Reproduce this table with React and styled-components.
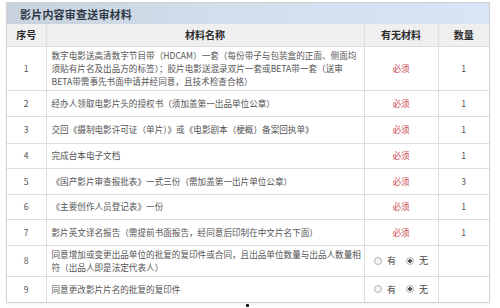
import React from "react";
import styled, { createGlobalStyle } from "styled-components";

const Global = createGlobalStyle`
  html, body { margin: 0; padding: 0; background: #fff; }
  body { font-family: "Noto Sans CJK SC", "Noto Sans", sans-serif; }
`;

const Page = styled.div`
  width: 500px;
  height: 308px;
  padding: 2px 10px 0 6px;
  box-sizing: border-box;
  display: flex;
  flex-direction: column;
  align-items: stretch;
`;

const Panel = styled.section`
  border: 1px solid #d2d2d2;
  box-shadow: 0 1px 2px rgba(0, 0, 0, 0.08);
  background: #fff;
`;

const TitleBar = styled.h2`
  margin: 0;
  height: 21px;
  display: flex;
  align-items: center;
  padding-left: 13px;
  background: linear-gradient(to right, #c8d2de 0%, #d2deec 45%, #d8e5f6 100%);
  font-size: 11px;
  font-weight: 700;
  color: #2f3a46;
  letter-spacing: 0.2px;
`;

const Table = styled.table`
  width: 100%;
  border-collapse: collapse;
  table-layout: fixed;
`;

const HeadRow = styled.tr`
  background: #efefef;
  height: 22px;
`;

const HeadCell = styled.th`
  font-size: 10px;
  font-weight: 700;
  color: #2b2b2b;
  text-align: center;
  padding: 0;
  border-left: 1px solid #dedede;
  &:first-child { border-left: none; }
`;

const Row = styled.tr`
  height: ${(p) => p.$h || 26}px;
  border-top: 1px solid #dcdcdc;
`;

const Cell = styled.td`
  font-size: 8.6px;
  line-height: 13px;
  color: #555;
  padding: 2px ${(p) => (p.$left ? "5px" : "0")};
  text-align: ${(p) => (p.$left ? "left" : "center")};
  vertical-align: middle;
  border-left: 1px solid #dedede;
  white-space: nowrap;
  &:first-child { border-left: none; }
`;

const Line = styled.span`
  display: block;
`;

const Required = styled.span`
  color: #cc4a52;
`;

const RadioGroup = styled.div`
  display: flex;
  align-items: center;
  justify-content: center;
  gap: 4px;
`;

const RadioItem = styled.label`
  display: flex;
  align-items: center;
  gap: 5px;
  margin: 0 3px;
  font-size: 9px;
  color: #444;
`;

const RadioDot = styled.span`
  width: 6px;
  height: 6px;
  border-radius: 50%;
  border: 1px solid #b5b5b5;
  background: ${(p) => (p.$on ? "radial-gradient(circle, #555 0 1.6px, #f4f4f4 2px)" : "#f4f4f4")};
  box-sizing: content-box;
`;

const Footer = styled.div`
  display: flex;
  justify-content: center;
  padding-top: 1px;
`;

const Dot = styled.span`
  width: 3px;
  height: 3px;
  background: #111;
  border-radius: 1px;
  margin-left: -2px;
`;

const Radio = () => (
  <RadioGroup>
    <RadioItem>
      <RadioDot />有
    </RadioItem>
    <RadioItem>
      <RadioDot $on />无
    </RadioItem>
  </RadioGroup>
);

const rows = [
  {
    n: 1,
    h: 43,
    lines: [
      "数字电影送高清数字节目带（HDCAM）一套（每份带子与包装盒的正面、侧面均",
      "须贴有片名及出品方的标签）；胶片电影送混录双片一套或BETA带一套（送审",
      "BETA带需事先书面申请并经同意，且技术检查合格）",
    ],
    q: "1",
  },
  { n: 2, lines: ["经办人领取电影片头的授权书（须加盖第一出品单位公章）"], q: "1" },
  { n: 3, h: 27, lines: ["交回《摄制电影许可证（单片）》或《电影剧本（梗概）备案回执单》"], q: "1" },
  { n: 4, h: 25, lines: ["完成台本电子文档"], q: "1" },
  { n: 5, lines: ["《国产影片审查报批表》一式三份（需加盖第一出片单位公章）"], q: "3" },
  { n: 6, h: 25, lines: ["《主要创作人员登记表》一份"], q: "1" },
  { n: 7, lines: ["影片英文译名报告（需提前书面报告，经同意后印制在中文片名下面）"], q: "1" },
  {
    n: 8,
    h: 31,
    radio: true,
    lines: [
      "同意增加或变更出品单位的批复的复印件或合同，且出品单位数量与出品人数量相",
      "符（出品人即是法定代表人）",
    ],
    q: "",
  },
  { n: 9, radio: true, lines: ["同意更改影片片名的批复的复印件"], q: "" },
];

export default function App() {
  return (
    <Page>
      <Global />
      <Panel>
        <TitleBar>影片内容审查送审材料</TitleBar>
        <Table>
          <colgroup>
            <col style={{ width: 39 }} />
            <col style={{ width: 318 }} />
            <col style={{ width: 74 }} />
            <col />
          </colgroup>
          <thead>
            <HeadRow>
              <HeadCell>序号</HeadCell>
              <HeadCell>材料名称</HeadCell>
              <HeadCell>有无材料</HeadCell>
              <HeadCell>数量</HeadCell>
            </HeadRow>
          </thead>
          <tbody>
            {rows.map((r) => (
              <Row key={r.n} $h={r.h}>
                <Cell>{r.n}</Cell>
                <Cell $left>
                  {r.lines.map((l, i) => (
                    <Line key={i}>{l}</Line>
                  ))}
                </Cell>
                <Cell>{r.radio ? <Radio /> : <Required>必须</Required>}</Cell>
                <Cell>{r.q}</Cell>
              </Row>
            ))}
          </tbody>
        </Table>
      </Panel>
      <Footer>
        <Dot />
      </Footer>
    </Page>
  );
}
